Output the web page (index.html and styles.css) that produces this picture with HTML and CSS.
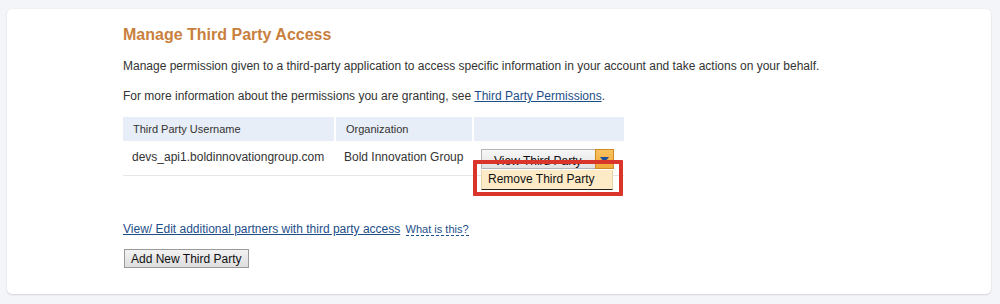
FILE: index.html
```html
<!DOCTYPE html>
<html>
<head>
<meta charset="utf-8">
<link rel="stylesheet" href="styles.css">
</head>
<body>
<div class="card">
  <div class="content">
    <h1 class="title">Manage Third Party Access</h1>
    <p class="para p1">Manage permission given to a third-party application to access specific information in your account and take actions on your behalf.</p>
    <p class="para p2">For more information about the permissions you are granting, see <a href="#" class="link">Third Party Permissions</a>.</p>
    <table class="grid">
      <colgroup>
        <col class="c1">
        <col class="c2">
        <col class="c3">
      </colgroup>
      <thead>
        <tr>
          <th>Third Party Username</th>
          <th>Organization</th>
          <th class="last"></th>
        </tr>
      </thead>
      <tbody>
        <tr>
          <td>devs_api1.boldinnovationgroup.com</td>
          <td class="org">Bold Innovation Group</td>
          <td class="action">
            <div class="split">
              <span class="split-main">View Third Party</span>
              <span class="split-arrow"><svg width="9" height="6" viewBox="0 0 9 6"><path d="M0 0H9L4.5 5.5Z" fill="#1f4f9a"/></svg></span>
              <div class="menu">Remove Third Party</div>
            </div>
            <div class="highlight"></div>
          </td>
        </tr>
      </tbody>
    </table>
    <div class="more">
      <a href="#" class="link">View/ Edit additional partners with third party access</a>
      <a href="#" class="help">What is this?</a>
    </div>
    <button class="btn">Add New Third Party</button>
  </div>
</div>
</body>
</html>
```

FILE: styles.css
```css
html, body {
  margin: 0;
  padding: 0;
}
body {
  background: #f4f5f9;
  font-family: "Liberation Sans", Arial, sans-serif;
  color: #333;
  padding: 9px 9px 10px 7px;
  height: 304px;
  box-sizing: border-box;
}
.card {
  background: #fff;
  border-radius: 5px;
  box-shadow: 0 1px 2px rgba(0,0,0,0.12), 0 0 1px rgba(0,0,0,0.08);
  height: 285px;
  box-sizing: border-box;
  padding: 17px 0 0 116px;
}
.title {
  margin: 0;
  font-size: 16px;
  font-weight: bold;
  color: #c97f3d;
  line-height: 18px;
}
.para {
  margin: 0;
  font-size: 12px;
  line-height: 16px;
}
.p1 { margin-top: 14px; }
.p2 { margin-top: 14px; }
.link {
  color: #1d4e89;
  text-decoration: underline;
}
.grid {
  margin-top: 13px;
  border-collapse: separate;
  border-spacing: 0;
  table-layout: fixed;
  width: 501px;
}
.c1 { width: 213px; }
.c2 { width: 138px; }
.c3 { width: 150px; }
.grid th {
  background: #e8eef7;
  font-size: 11px;
  font-weight: normal;
  text-align: left;
  color: #333;
  height: 24px;
  padding: 0 0 0 10px;
  box-sizing: border-box;
  border-right: 2px solid #fff;
}
.grid th.last { border-right: 0; }
.grid td {
  font-size: 12px;
  height: 35px;
  padding: 0 0 3px 9px;
  box-sizing: border-box;
  border-bottom: 1px solid #e6e6e6;
  vertical-align: middle;
  white-space: nowrap;
}
.grid td.org { padding-left: 8px; }
.grid td.action {
  position: relative;
  padding: 0 0 0 7px;
  vertical-align: top;
}
.split {
  position: relative;
  display: flex;
  margin-top: 8px;
  width: 133px;
  height: 20px;
}
.split-main {
  flex: 1;
  box-sizing: border-box;
  border: 1px solid #b5b5b5;
  border-right: 0;
  background: linear-gradient(#f7f7f7, #e2e2e2);
  font-size: 12px;
  color: #111;
  line-height: 20px;
  padding-left: 12px;
  padding-top: 1px;
  overflow: hidden;
  white-space: nowrap;
}
.split-arrow {
  width: 19px;
  box-sizing: border-box;
  border: 1px solid #d18a22;
  background: linear-gradient(#f8c260, #f0a93a);
  display: flex;
  align-items: center;
  justify-content: center;
  padding-top: 2px;
}
.menu {
  position: absolute;
  left: 0;
  top: 21px;
  width: 132px;
  height: 20px;
  box-sizing: border-box;
  background: #fdebc8;
  border-left: 1px solid #e9d3a8;
  border-right: 1px solid #e9d3a8;
  border-bottom: 1px solid #222;
  font-size: 12px;
  color: #111;
  line-height: 18px;
  padding-left: 6px;
}
.highlight {
  position: absolute;
  left: -1px;
  top: 19px;
  width: 150px;
  height: 36px;
  box-sizing: border-box;
  border: 4px solid #d9352a;
  border-radius: 1px;
}
.more {
  margin-top: 45px;
  font-size: 12px;
  line-height: 16px;
}
.help {
  font-size: 11px;
  color: #1d4e89;
  text-decoration: none;
  border-bottom: 1px dashed #1d4e89;
  margin-left: 2px;
}
.btn {
  display: block;
  margin-top: 12px;
  margin-left: 1px;
  font-family: "Liberation Sans", Arial, sans-serif;
  font-size: 12px;
  color: #111;
  height: 19px;
  padding: 0 6px;
  line-height: 16px;
  border: 1px solid #9a9a9a;
  background: linear-gradient(#f2f2f2, #dedede);
  border-radius: 0;
}
```
